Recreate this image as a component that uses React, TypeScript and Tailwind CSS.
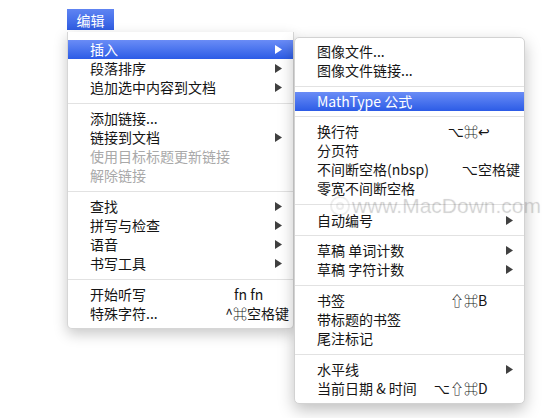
import clsx from "clsx";

type Item =
  | { sep: true; h?: 11 | 12 | 13 }
  | {
      sep?: false;
      label: string;
      mods?: string;
      k?: string;
      arrow?: boolean;
      disabled?: boolean;
      active?: boolean;
    };

const editMenu: Item[] = [
  { label: "插入", arrow: true, active: true },
  { label: "段落排序", arrow: true },
  { label: "追加选中内容到文档", arrow: true },
  { sep: true },
  { label: "添加链接..." },
  { label: "链接到文档", arrow: true },
  { label: "使用目标标题更新链接", disabled: true },
  { label: "解除链接", disabled: true },
  { sep: true },
  { label: "查找", arrow: true },
  { label: "拼写与检查", arrow: true },
  { label: "语音", arrow: true },
  { label: "书写工具", arrow: true },
  { sep: true },
  { label: "开始听写", mods: "fn", k: "\u00a0fn" },
  { label: "特殊字符...", mods: "^⌘", k: "空格键" },
];

const insertMenu: Item[] = [
  { label: "图像文件..." },
  { label: "图像文件链接..." },
  { sep: true, h: 12 },
  { label: "MathType 公式", active: true },
  { sep: true, h: 11 },
  { label: "换行符", mods: "⌥⌘", k: "↩" },
  { label: "分页符" },
  { label: "不间断空格(nbsp)", mods: "⌥", k: "空格键" },
  { label: "零宽不间断空格" },
  { sep: true, h: 13 },
  { label: "自动编号", arrow: true },
  { sep: true, h: 11 },
  { label: "草稿 单词计数", arrow: true },
  { label: "草稿 字符计数", arrow: true },
  { sep: true, h: 12 },
  { label: "书签", mods: "⇧⌘", k: "B" },
  { label: "带标题的书签" },
  { label: "尾注标记" },
  { sep: true, h: 12 },
  { label: "水平线", arrow: true },
  { label: "当前日期 & 时间", mods: "⌥⇧⌘", k: "D" },
];

function Arrow() {
  return (
    <svg width="7" height="9" viewBox="0 0 7 9" className="fill-current">
      <polygon points="0,0 7,4.5 0,9" />
    </svg>
  );
}

function MenuItems({ items }: { items: Item[] }) {
  return (
    <>
      {items.map((it, i) => {
        if (it.sep) {
          return (
            <div
              key={i}
              className={clsx(
                "flex items-center",
                it.h === 11 ? "h-[11px]" : it.h === 13 ? "h-[13px]" : "h-[12px]"
              )}
            >
              <div className="h-px w-full bg-[#e2e2e2]" />
            </div>
          );
        }
        return (
          <div
            key={i}
            className={clsx(
              "flex h-[19px] items-center pl-[22px] leading-[19px] whitespace-nowrap",
              it.active
                ? "bg-gradient-to-b from-[#6a8cf6] to-[#2c5be6] text-white"
                : it.disabled
                  ? "text-[#a9a9a9]"
                  : "text-[#151515]"
            )}
          >
            <span className="flex-1">{it.label}</span>
            {it.mods && <span className="text-right">{it.mods}</span>}
            <span
              className={clsx(
                "flex w-[46px] items-center",
                it.arrow && "justify-end pr-[11px]",
                it.active ? "text-white" : "text-[#404040]"
              )}
            >
              {it.arrow ? <Arrow /> : <span className="text-[#151515]">{it.k}</span>}
            </span>
          </div>
        );
      })}
    </>
  );
}

export default function App() {
  return (
    <div className="relative h-[418px] w-[550px] overflow-hidden bg-white font-['Noto_Sans_CJK_SC','DejaVu_Sans',sans-serif] text-[14px]">
      {/* menu bar */}
      <div className="pt-[9px] pl-[67px]">
        <div className="flex h-[21px] w-[47px] items-center justify-center bg-gradient-to-b from-[#5f84f2] to-[#2f5ce2] leading-none text-white">
          编辑
        </div>
      </div>

      <div className="flex items-start pl-[67px]">
        <div className="mt-[2px] w-[227px] rounded-b-[5px] border border-t-0 border-[#d6d6d6] bg-white pt-[8px] pb-[5px] shadow-[0_5px_14px_rgba(0,0,0,0.22)]">
          <MenuItems items={editMenu} />
        </div>
        <div className="mt-[7px] w-[231px] overflow-hidden rounded-[5px] border border-[#d2d2d2] bg-white pt-[4px] pb-[5px] shadow-[0_6px_16px_rgba(0,0,0,0.25)]">
          <MenuItems items={insertMenu} />
        </div>
      </div>

      {/* watermark */}
      <div className="pointer-events-none absolute top-[195px] left-[330px] flex items-center gap-[2px] text-[rgba(0,0,0,0.07)]">
        <div className="flex h-[20px] w-[20px] items-center justify-center rounded-full border-2 border-[rgba(0,0,0,0.07)]">
          <div className="h-[8px] w-[8px] rounded-full border-2 border-[rgba(0,0,0,0.07)]" />
        </div>
        <span className="font-['Liberation_Sans',sans-serif] text-[21px] leading-none [text-shadow:0_0_1px_rgba(0,0,0,0.12)]">
          www.MacDown.com
        </span>
      </div>
    </div>
  );
}
